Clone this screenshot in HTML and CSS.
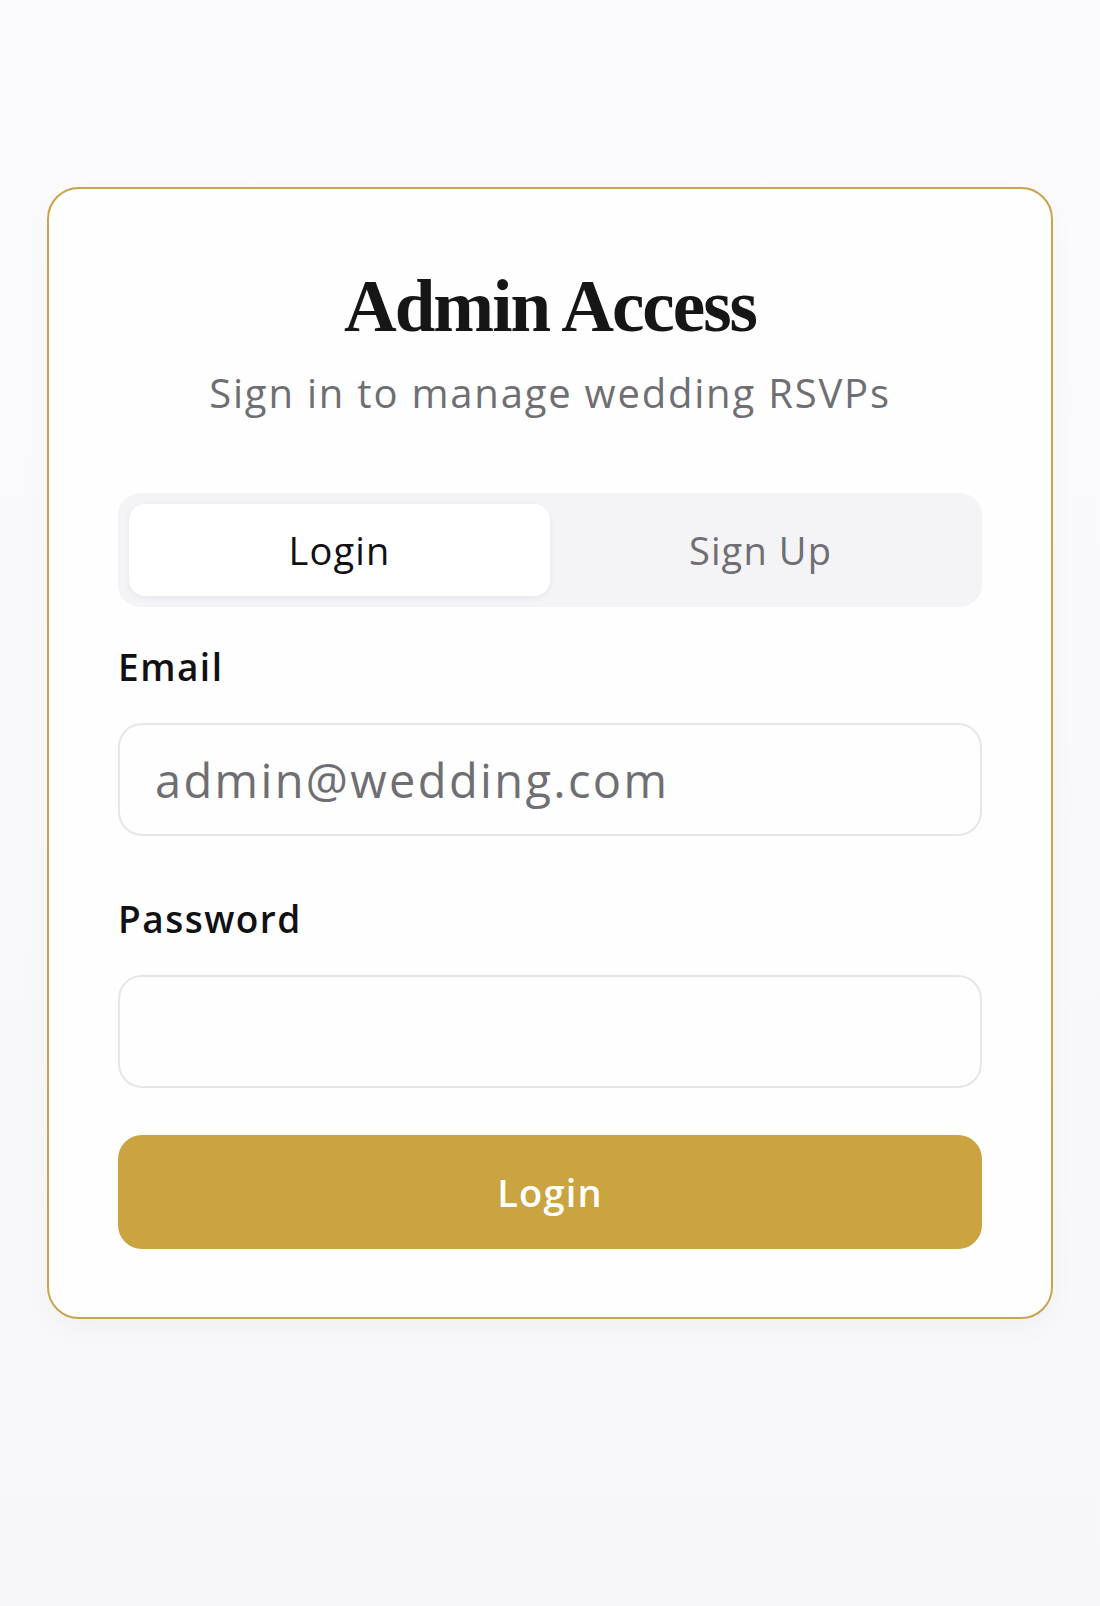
FILE: index.html
```html
<!DOCTYPE html>
<html lang="en">
<head>
<meta charset="utf-8">
<title>Admin Access</title>
<link rel="stylesheet" href="styles.css">
</head>
<body>
<main class="page">
  <section class="card">
    <header class="card-head">
      <h1 class="title">Admin Access</h1>
      <p class="subtitle">Sign in to manage wedding RSVPs</p>
    </header>
    <div class="tabs">
      <button class="tab tab-active" type="button">Login</button>
      <button class="tab" type="button">Sign Up</button>
    </div>
    <form class="form">
      <div class="field">
        <label class="label" for="email">Email</label>
        <input class="input" id="email" type="email" placeholder="admin@wedding.com">
      </div>
      <div class="field field-password">
        <label class="label" for="password">Password</label>
        <input class="input" id="password" type="password">
      </div>
      <button class="submit" type="button">Login</button>
    </form>
  </section>
</main>
</body>
</html>
```
FILE: styles.css
```css
* { box-sizing: border-box; }

html, body {
  margin: 0;
  padding: 0;
}

body {
  min-height: 1606px;
  background: linear-gradient(180deg, #fbfafc 0%, #f9f8fa 50%, #f7f6f9 100%);
  font-family: "Open Sans", "Noto Sans", sans-serif;
  color: #111114;
}

.page {
  padding: 187px 47px 0;
}

.card {
  width: 1006px;
  background: #fefefe;
  border: 2px solid #c7a54c;
  border-radius: 32px;
  padding: 78px 69px 68px;
  box-shadow: 0 10px 28px rgba(40, 30, 60, 0.03);
}

.card-head {
  text-align: center;
}

.title {
  margin: 0;
  font-family: "Liberation Serif", "Times New Roman", serif;
  font-weight: 700;
  font-size: 73px;
  line-height: 80px;
  letter-spacing: -2px;
  color: #161616;
}

.subtitle {
  margin: 22px 0 0;
  font-size: 40px;
  line-height: 48px;
  letter-spacing: 0.045em;
  color: #6e6e73;
}

.tabs {
  margin-top: 76px;
  display: grid;
  grid-template-columns: 1fr 1fr;
  padding: 11px;
  background: #f4f3f6;
  border-radius: 22px;
}

.tab {
  height: 92px;
  border: 0;
  background: transparent;
  border-radius: 16px;
  font-family: inherit;
  font-size: 38px;
  font-weight: 500;
  letter-spacing: 0.03em;
  color: #6e6e73;
  cursor: pointer;
}

.tab-active {
  background: #ffffff;
  color: #111114;
  box-shadow: 0 2px 6px rgba(30, 20, 50, 0.06);
}

.form {
  margin-top: 38px;
  display: flex;
  flex-direction: column;
}

.field {
  display: flex;
  flex-direction: column;
}

.field-password {
  margin-top: 61px;
}

.label {
  font-size: 37px;
  line-height: 44px;
  font-weight: 600;
  letter-spacing: 0.04em;
  color: #111114;
  margin-bottom: 34px;
}

.input {
  height: 113px;
  width: 100%;
  border: 2px solid #e6e5e8;
  border-radius: 24px;
  background: #fefefe;
  padding: 0 35px;
  font-family: inherit;
  font-size: 47px;
  letter-spacing: 0.05em;
  color: #111114;
  outline: none;
}

.input::placeholder {
  color: #6e6e73;
  opacity: 1;
}

.submit {
  margin-top: 47px;
  height: 114px;
  border: 0;
  border-radius: 24px;
  background: #c9a441;
  color: #ffffff;
  font-family: inherit;
  font-size: 38px;
  font-weight: 600;
  letter-spacing: 0.03em;
  cursor: pointer;
}
```
